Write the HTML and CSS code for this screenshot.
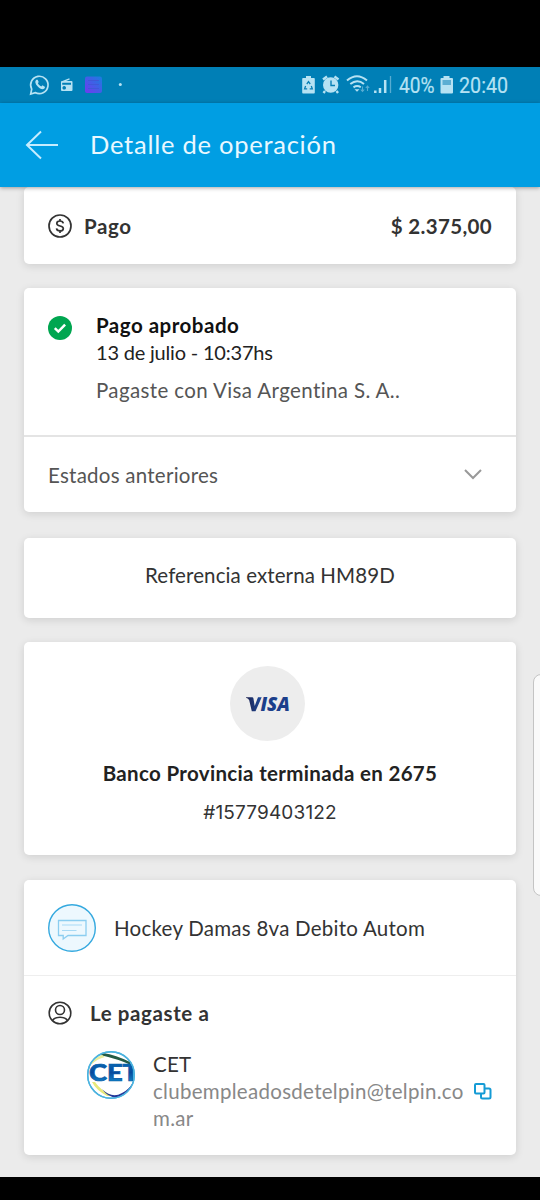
FILE: index.html
```html
<!DOCTYPE html>
<html lang="es">
<head>
<meta charset="utf-8">
<title>Detalle de operación</title>
<link rel="stylesheet" href="styles.css">
</head>
<body>
<div class="screen">
  <div class="statusbar">
    <svg class="notifications" width="110" height="36" viewBox="24 67 110 36" fill="none" stroke="#b6e2f3">
      <path d="M30.700 94l1-4.900a8.700 8.700 0 1 1 3.500 3.500z" stroke-width="1.700"/>
      <path d="M36.300 79.700c-1.700 1.400-1.200 4 1.200 6.600 2.500 2.700 5.300 3.800 6.900 2.100l.7-1.500-2.600-1.600-1.200 1.200c-1.800-.7-2.800-1.900-3.400-3.200l.8-1.200-1.100-2.400z" fill="#b6e2f3" stroke="none"/>
      <path d="M62 81.800l7.500-3" stroke-width="1.300"/>
      <path fill-rule="evenodd" d="M62 81h9.500q1 0 1 1v8q0 1-1 1H62q-1 0-1-1v-8q0-1 1-1zm.2 1.700v2h8.800v-2zm2 3.300a1.800 1.800 0 1 0 .01 0z" fill="#b6e2f3" stroke="none"/>
      <defs><linearGradient id="app" x1="0" y1="1" x2="1" y2="0"><stop stop-color="#7139ef"/><stop offset="1" stop-color="#187fdf"/></linearGradient></defs>
      <rect x="85" y="76.500" width="17" height="16.500" rx="2" fill="url(#app)" stroke="none"/>
      <path d="M88 80.500h11M88 84.500h11M88 88.500h11" stroke="#3f58d8" stroke-width="1.200"/>
      <circle cx="120.300" cy="84.500" r="1.500" fill="#b6e2f3" stroke="none"/>
    </svg>
    <div class="indicators">
      <svg width="92" height="36" viewBox="301 67 92 36" fill="none" stroke="#b6e2f3">
        <path d="M306 76h5v2h3q.8 0 .8 1v13.500q0 1-.8 1h-11q-.8 0-.8-1V79q0-1 .8-1h3z" fill="#b6e2f3" stroke="none"/>
        <path d="M306.800 84l1.700-2.300 1.700 2.300M311.300 86l1 2.800h-2.600M307.200 88.800h-2.600l1-2.800" stroke="#087fb5" stroke-width="1.300"/>
        <circle cx="330.700" cy="85" r="7.700" fill="#b6e2f3" stroke="none"/>
        <path d="M323 79.500l4-3M338.500 79.500l-4-3M325 91l-1.500 2M336.500 91l1.500 2" stroke-width="2.400"/>
        <path d="M331 80.500v5h4" stroke="#087fb5" stroke-width="1.400"/>
        <path d="M347 80.500q10-8.500 20 0M350.300 84q7-5.500 13.700 0M353.500 87.300q3.700-2.500 7.300 0" stroke-width="2"/>
        <path d="M354.500 89.200h5l-2.500 2.600z" fill="#b6e2f3" stroke="none"/>
        <path d="M362.500 86.500v5m-1.700-2l1.700 2 1.700-2M367.500 91v-5m-1.700 2l1.700-2 1.700 2" stroke="#58acd2" stroke-width="1.100"/>
        <path d="M375.300 90.500v2.500M380 88v5M385.200 80v13" stroke-width="2.500"/>
        <path d="M390.500 76v17" stroke="#58acd2" stroke-width="1.300"/>
      </svg>
      <span class="level">40%</span>
      <svg width="14" height="18" viewBox="0 0 14 18"><path d="M3.500 0h6v2H12q1 0 1 1v13.500q0 1-1 1H1.500q-1 0-1-1V3q0-1 1-1h2z" fill="#b6e2f3"/><path d="M2.500 4h8.500v5H2.500z" fill="#5caed3"/></svg>
      <span class="clock">20:40</span>
    </div>
  </div>
  <header class="appbar">
    <svg width="34" height="30" viewBox="0 0 34 30" fill="none" stroke="#c5ecff" stroke-width="2"><path d="M33 15H2M16 1.500L2 15l14 13.500"/></svg>
    <h1>Detalle de operación</h1>
  </header>
  <main class="content">
    <section class="card payment">
      <svg width="24" height="24" viewBox="0 0 24 24" fill="none" stroke="#333" stroke-width="1.700"><circle cx="12" cy="12" r="11"/><path d="M15.300 9.300C15 7.800 13.800 7 12 7c-1.900 0-3.200.9-3.200 2.400 0 3.400 6.500 1.800 6.500 5 0 1.600-1.300 2.500-3.300 2.500-2 0-3.300-.9-3.500-2.500M12 5v2M12 17v2"/></svg>
      <strong class="label">Pago</strong>
      <strong class="amount">$ 2.375,00</strong>
    </section>

    <section class="card status">
      <div class="status-main">
        <svg width="24" height="24" viewBox="0 0 24 24"><circle cx="12" cy="12" r="12" fill="#00a650"/><path d="M6.800 12.200l3.500 3.400 6.800-7" fill="none" stroke="#fff" stroke-width="2.500"/></svg>
        <div>
          <strong class="approved">Pago aprobado</strong>
          <p class="date">13 de julio - 10:37hs</p>
          <p class="method">Pagaste con Visa Argentina S. A..</p>
        </div>
      </div>
      <div class="previous">
        <span>Estados anteriores</span>
        <svg width="18" height="11" viewBox="0 0 18 11" fill="none" stroke="#999" stroke-width="2"><path d="M1 1l8 8 8-8"/></svg>
      </div>
    </section>

    <section class="card reference"><span>Referencia externa HM89D</span></section>

    <section class="card bank">
      <div class="visa">
        <svg width="52" height="30" viewBox="-3 -6 52 30">
          <defs><linearGradient id="blue"><stop stop-color="#20224f"/><stop offset=".5" stop-color="#1c3776"/><stop offset="1" stop-color="#1d4a9d"/></linearGradient></defs>
          <path d="M1 2.800V2.200h6.200q1 0 1.200 1L9.700 11 13 2.200h3.700L10.500 16.300H6.800L4.200 5.300Q3.600 3.500 1 2.800z" fill="url(#blue)"/>
          <text class="visa-name" x="15.500" y="16.300" textLength="29.500" lengthAdjust="spacingAndGlyphs" fill="#1c3f8b" aria-label="VISA">ISA</text>
        </svg>
      </div>
      <strong class="bank-name">Banco Provincia terminada en 2675</strong>
      <span class="number">#15779403122</span>
    </section>

    <section class="card recipient">
      <div class="concept">
        <svg width="48" height="48" viewBox="0 0 48 48" fill="none"><circle cx="24" cy="24" r="23.300" fill="#edf8fe" stroke="#35a9df" stroke-width="1.400"/><path d="M10.500 16.500h27.500V31.500H20l-4.800 3.500v-3.500h-4.700z" stroke="#8bcdf0" stroke-width="1.300"/><path d="M14 21h20M14 26.500h14.500" stroke="#a8daf5" stroke-width="1.200"/></svg>
        <span>Hockey Damas 8va Debito Autom</span>
      </div>
      <div class="paid-to">
        <svg width="24" height="24" viewBox="0 0 24 24" fill="none" stroke="#333" stroke-width="1.600"><circle cx="12" cy="12" r="10.800"/><circle cx="12" cy="9" r="4.500"/><path d="M4.500 19.500c1.300-2.300 3.500-3.300 7.500-3.300s6.200 1 7.500 3.300"/></svg>
        <strong>Le pagaste a</strong>
      </div>
      <div class="account">
        <svg width="48" height="48" viewBox="0 0 48 48">
          <defs><clipPath id="round"><circle cx="24" cy="24" r="23"/></clipPath><linearGradient id="cet" x1="0" y1="0" x2="0" y2="1"><stop stop-color="#0876bd"/><stop offset=".5" stop-color="#064a9d"/><stop offset="1" stop-color="#159bd9"/></linearGradient></defs>
          <circle cx="24" cy="24" r="23.300" fill="#fff" stroke="#4bb3df" stroke-width="1.400"/>
          <g clip-path="url(#round)"><path d="M13 4q18 4 31 10l-1-3Q29 4 16 2z" fill="#245b45"/><path d="M3 13q4-6 12-9l3 2Q10 8 5 13z" fill="#e9ed9b"/><path d="M8 31q6 9 18 14h-6Q9 39 5 31z" fill="#e7e97c"/><path d="M15 38q10 10 20 4 8-4 11-11-1 10-12 15-11 3-19-8z" fill="#24389a"/><text class="cet-logo" x="2" y="30" textLength="50" lengthAdjust="spacingAndGlyphs" fill="url(#cet)" stroke="#075ba8" stroke-width=".7">CET</text></g>
          <circle cx="24" cy="24" r="23.300" fill="none" stroke="#4bb3df" stroke-width="1.400"/>
        </svg>
        <div class="details"><span class="name">CET</span><span class="email">clubempleadosdetelpin@telpin.co<br>m.ar</span></div>
        <svg class="copy" width="18" height="17" viewBox="0 0 18 17" fill="none" stroke="#159bd5" stroke-width="2"><rect x="1" y="1" width="9.500" height="9.500" rx="1"/><path d="M10.500 5.500H15q1.500 0 1.500 1.500v7q0 1.500-1.500 1.500H8.500Q7 15.500 7 14v-3.500"/></svg>
      </div>
    </section>
    <div class="edge-handle"></div>
  </main>
</div>
</body>
</html>
```
FILE: styles.css
```css
* { box-sizing: border-box; }
body { margin: 0; background: #000; font-family: Lato, "Liberation Sans", sans-serif; font-size: 20.5px; letter-spacing: .25px; color: #333; }
h1, p { margin: 0; font-weight: 400; }
svg { display: block; flex-shrink: 0; letter-spacing: 0; }
span, strong, p, h1 { white-space: nowrap; }
strong { font-weight: 700; letter-spacing: .33px; }
.screen { height: 1200px; padding: 67px 0 23px; display: flex; flex-direction: column; overflow: hidden; background: #000; }
.statusbar { height: 36px; flex: none; background: #007fb6; display: flex; justify-content: space-between; padding: 0 32px 0 24px; }
.indicators { display: flex; align-items: center; font: 22px/36px Roboto, sans-serif; letter-spacing: 0; color: #b6e2f3; }
.level, .clock { padding-top: 1px; -webkit-text-stroke: .2px #b6e2f3; }
.level { width: 41px; margin-left: 6px; transform: scaleX(.87); transform-origin: left; }
.clock { width: 49px; margin-left: 5px; transform: scaleX(.895); transform-origin: left; }
.appbar { height: 84px; flex: none; display: flex; align-items: center; gap: 31px; padding-left: 25px; background: #009ee3; color: #e9f8ff; box-shadow: 0 1px 4px rgba(0,0,0,.35); z-index: 1; }
h1 { font-size: 25.5px; line-height: 32px; letter-spacing: .75px; padding-bottom: 3px; }
.content { position: relative; flex: 1; overflow: hidden; background: #ebebeb; padding: 0 24px; }
.card { background: #fff; border-radius: 5px; box-shadow: 0 2px 8px rgba(0,0,0,.12); margin-bottom: 24px; }
.payment { height: 77px; display: flex; align-items: center; padding: 0 24px; gap: 12px; }
.label { letter-spacing: .6px; }
.amount { margin-left: auto; }
.status { height: 224px; margin-bottom: 26px; }
.status-main { height: 149px; border-bottom: 2px solid #e4e4e4; padding: 23px 24px; display: flex; gap: 24px; }
.status-main > svg { margin-top: 5px; }
.approved { display: block; line-height: 28px; color: #111; letter-spacing: .5px; }
.date { line-height: 27px; color: #222; font-size: 20px; letter-spacing: -.2px; }
.method { line-height: 28px; margin-top: 10px; color: #555; letter-spacing: .38px; }
.previous { height: 75px; display: flex; align-items: center; justify-content: space-between; padding: 0 34px 0 24px; color: #555; }
.reference { height: 80px; padding-bottom: 6px; display: flex; align-items: center; justify-content: center; letter-spacing: .1px; }
.bank { height: 213px; margin-bottom: 25px; padding-top: 24px; display: flex; flex-direction: column; align-items: center; }
.visa { width: 75px; height: 75px; border-radius: 50%; background: #ededed; display: grid; place-items: center; margin-right: 5px; }
.visa-name { font: italic 800 19.5px "Open Sans", sans-serif; }
.bank-name { line-height: 28px; margin-top: 18px; color: #222; }
.number { font: 19px/28px Inter, sans-serif; letter-spacing: .15px; margin-top: 12px; }
.recipient { height: 275px; margin: 0; }
.concept { height: 96px; border-bottom: 1px solid #eee; display: flex; align-items: center; gap: 18px; padding: 0 24px; }
.paid-to { margin-top: 25px; padding-left: 24px; height: 24px; display: flex; align-items: center; gap: 18px; }
.paid-to strong { letter-spacing: .6px; }
.account { display: flex; padding: 26px 24px 0 63px; }
.details { margin-left: 18px; display: flex; flex-direction: column; line-height: 27px; }
.email { color: #888; letter-spacing: .29px; }
.copy { margin: 32px 0 0 auto; }
.cet-logo { font: 900 22px Lato, sans-serif; }
.edge-handle { position: absolute; left: 533px; top: 487px; width: 20px; height: 222px; border: 1px solid #c4c4c4; border-radius: 8px; background: #fafafa; }
```
